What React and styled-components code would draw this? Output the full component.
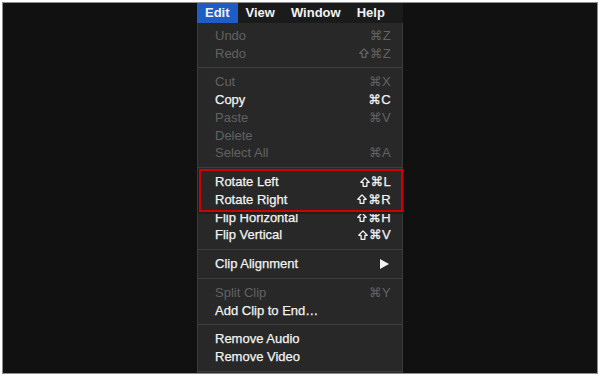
import React from 'react';
import styled, { createGlobalStyle } from 'styled-components';

const Global = createGlobalStyle`
  html, body { margin: 0; padding: 0; background: #ffffff; }
  body { font-family: "Liberation Sans", "DejaVu Sans", Arial, sans-serif; }
`;

const Frame = styled.div`
  margin: 2px;
  width: 594px;
  height: 370px;
  border: 1px solid #8e8e8e;
  background: #111111;
  overflow: hidden;
  display: flex;
  justify-content: center;
`;

const Column = styled.div`
  width: 206px;
  display: flex;
  flex-direction: column;
`;

const MenuBar = styled.div`
  height: 21px;
  display: flex;
  background: #1b1b1b;
`;

const BarItem = styled.div`
  padding: 0 8px;
  height: 20px;
  line-height: 20px;
  font-size: 13px;
  font-weight: bold;
  color: #f2f2f2;
  background: ${p => (p.$active ? '#1f5dc6' : 'transparent')};
`;

const Dropdown = styled.div`
  position: relative;
  flex: 1;
  background: #282828;
  border-left: 1px solid #3a3a3a;
  border-right: 1px solid #3a3a3a;
  padding-top: 3.5px;
`;

const Row = styled.div`
  height: 17.75px;
  display: flex;
  align-items: center;
  padding: 0 11px 0 17px;
  font-size: 13px;
  color: ${p => (p.$disabled ? '#626262' : '#f2f2f2')};
  -webkit-text-stroke: ${p => (p.$disabled ? '0' : '0.25px')};
`;

const Label = styled.span`
  flex: 1;
  white-space: nowrap;
`;

const Shortcut = styled.span`
  display: inline-flex;
  align-items: center;
  white-space: nowrap;
  letter-spacing: 0.3px;
`;

const Sym = styled.span`
  font-family: "DejaVu Sans", sans-serif;
  font-size: 12.5px;
`;

const ShiftIcon = styled.svg`
  width: 10px;
  height: 10px;
  margin-right: 1px;
`;

const Separator = styled.div`
  height: 1px;
  margin: 5px 0;
  background: #3d3d3d;
`;

const Arrow = styled.svg`
  width: 9px;
  height: 10px;
  margin-right: 2px;
`;

const Highlight = styled.div`
  position: absolute;
  left: 1px;
  top: 146px;
  width: 200px;
  height: 39px;
  border: 2px solid #d00000;
  box-shadow: 0 1px 0 1px #1e1e1e;
`;

const items = [
  { label: 'Undo', sc: 'Z', dis: true },
  { label: 'Redo', sc: 'Z', shift: true, dis: true },
  'sep',
  { label: 'Cut', sc: 'X', dis: true },
  { label: 'Copy', sc: 'C' },
  { label: 'Paste', sc: 'V', dis: true },
  { label: 'Delete', dis: true },
  { label: 'Select All', sc: 'A', dis: true },
  'sep',
  { label: 'Rotate Left', sc: 'L', shift: true },
  { label: 'Rotate Right', sc: 'R', shift: true },
  { label: 'Flip Horizontal', sc: 'H', shift: true },
  { label: 'Flip Vertical', sc: 'V', shift: true },
  'sep',
  { label: 'Clip Alignment', sub: true },
  'sep',
  { label: 'Split Clip', sc: 'Y', dis: true },
  { label: 'Add Clip to End…' },
  'sep',
  { label: 'Remove Audio' },
  { label: 'Remove Video' },
  'sep',
];

export default function App() {
  return (
    <>
      <Global />
      <Frame>
        <Column>
          <MenuBar>
            <BarItem $active>Edit</BarItem>
            <BarItem>View</BarItem>
            <BarItem>Window</BarItem>
            <BarItem>Help</BarItem>
          </MenuBar>
          <Dropdown>
            {items.map((it, i) =>
              it === 'sep' ? (
                <Separator key={i} />
              ) : (
                <Row key={i} $disabled={it.dis}>
                  <Label>{it.label}</Label>
                  {it.sc && (
                    <Shortcut>
                      {it.shift && (
                        <ShiftIcon viewBox="0 0 10 10">
                          <path
                            d="M5 0.9 L9.2 5.3 H6.9 V9.3 H3.1 V5.3 H0.8 Z"
                            fill="none"
                            stroke="currentColor"
                            strokeWidth="1.3"
                            strokeLinejoin="round"
                          />
                        </ShiftIcon>
                      )}
                      <Sym>⌘</Sym>
                      {it.sc}
                    </Shortcut>
                  )}
                  {it.sub && (
                    <Arrow viewBox="0 0 9 10">
                      <path d="M0 0 L9 5 L0 10 Z" fill="#f2f2f2" />
                    </Arrow>
                  )}
                </Row>
              )
            )}
            <Highlight />
          </Dropdown>
        </Column>
      </Frame>
    </>
  );
}
